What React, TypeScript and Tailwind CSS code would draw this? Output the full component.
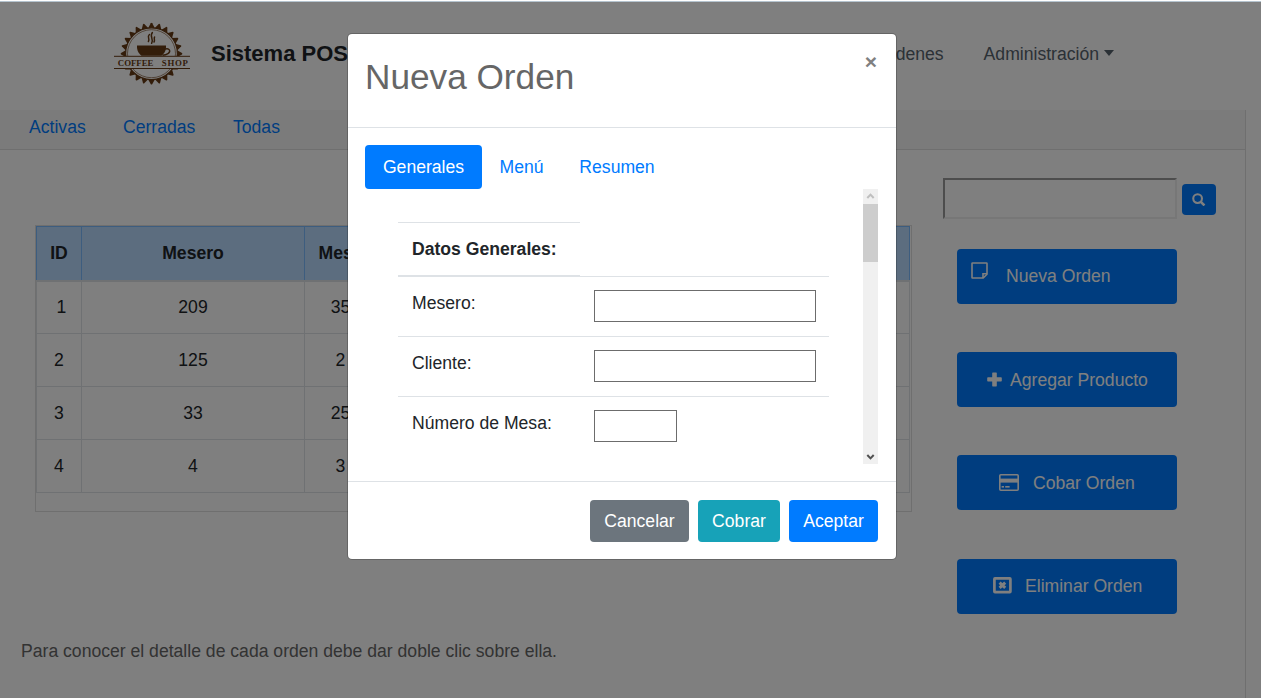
import type { ReactNode } from "react";

const TEETH = Array.from({ length: 24 }, (_, i) => i * 15);

function Logo() {
  return (
    <svg width="78" height="66" viewBox="113 21 78 66" className="shrink-0 text-[#663a14]" fill="currentColor">
      <g>
        {TEETH.map((a) => (
          <path key={a} d="M147.9 28.4 L150.8 23.2 Q151.5 22.4 152.2 23.2 L155.1 28.4 Z" transform={`rotate(${a} 151.5 53.7)`} />
        ))}
      </g>
      <circle cx="151.5" cy="53.7" r="25.9" fill="white" stroke="currentColor" strokeWidth="1.2" />
      <circle cx="151.5" cy="53.7" r="24" fill="none" stroke="currentColor" strokeWidth="0.6" />
      <rect x="113" y="56" width="78" height="12.4" fill="white" />
      <rect x="114" y="55.8" width="76" height="1" />
      <rect x="114" y="68" width="76" height="1" />
      <path d="M137 45.6 H166 C166.2 50 165 53 161.5 55.8 H141.5 C138 53 136.8 50 137 45.6 Z" />
      <path d="M164.5 49.2 C170 47.5 171 51.5 168 53.6 C166.4 54.8 164.5 55.2 162.5 55.2" fill="none" stroke="currentColor" strokeWidth="1.4" />
      <path d="M149.4 34.5 C146.5 37 150.3 38.5 148.4 41.5 M152.4 32.5 C149 36.5 154.2 38.5 151.6 43.3 M154.6 37 C153.4 38.5 155.4 39.8 154 42" fill="none" stroke="currentColor" strokeWidth="1.5" strokeLinecap="round" />
      <text x="117.8" y="65.6" textLength="35.6" lengthAdjust="spacing" fontFamily="Liberation Serif, serif" fontWeight="bold" fontSize="8.8">COFFEE</text>
      <text x="161.8" y="65.6" textLength="26" lengthAdjust="spacing" fontFamily="Liberation Serif, serif" fontWeight="bold" fontSize="8.8">SHOP</text>
    </svg>
  );
}

function SearchIcon() {
  return (
    <svg width="13.5" height="13.5" viewBox="0 0 13 13" fill="none" stroke="currentColor">
      <circle cx="5.4" cy="5.4" r="4.2" strokeWidth="2" />
      <path d="M8.5 8.5 L12 12" strokeWidth="2.4" />
    </svg>
  );
}

function NoteIcon() {
  return (
    <svg width="17" height="17" viewBox="0 0 17 17" fill="none" stroke="currentColor" strokeWidth="1.6">
      <path d="M1.6 1 H15.4 Q16 1 16 1.6 V12.2 L12.2 16 H1.6 Q1 16 1 15.4 V1.6 Q1 1 1.6 1 Z" />
      <path d="M16 11.8 H12 V16" />
    </svg>
  );
}

function PlusIcon() {
  return (
    <svg width="15" height="15" viewBox="0 0 15 15" fill="currentColor">
      <path d="M5.8 0.4 H9.2 Q9.8 0.4 9.8 1 V5.3 H14 Q14.8 5.3 14.8 6 V8.8 Q14.8 9.5 14 9.5 H9.8 V13.8 Q9.8 14.4 9.2 14.4 H5.8 Q5.2 14.4 5.2 13.8 V9.5 H1 Q0.2 9.5 0.2 8.8 V6 Q0.2 5.3 1 5.3 H5.2 V1 Q5.2 0.4 5.8 0.4 Z" />
    </svg>
  );
}

function CardIcon() {
  return (
    <svg width="20" height="17" viewBox="0 0 20 17" fill="currentColor">
      <rect x="0.8" y="0.8" width="18.4" height="15.4" rx="1" fill="none" stroke="currentColor" strokeWidth="1.6" />
      <rect x="1" y="4.6" width="18" height="4" />
      <rect x="2.6" y="12" width="2.4" height="1.6" />
      <rect x="6.2" y="12" width="4.4" height="1.6" />
    </svg>
  );
}

function DeleteIcon() {
  return (
    <svg width="19" height="17" viewBox="0 0 19 17" fill="none" stroke="currentColor">
      <rect x="1.4" y="1.4" width="16" height="13.8" rx="0.6" strokeWidth="2.7" />
      <path d="M6.6 5.7 L12.2 10.9 M12.2 5.7 L6.6 10.9" strokeWidth="3" />
    </svg>
  );
}

function ActionButton({ icon, label, className, iconClass, labelClass }: { icon: ReactNode; label: string; className: string; iconClass?: string; labelClass?: string }) {
  return (
    <button className={`flex h-[55px] w-[220px] items-center rounded-[4px] bg-[#007bff] text-white ${className}`}>
      <span className={iconClass}>{icon}</span>
      <span className={labelClass}>{label}</span>
    </button>
  );
}

const ORDERS = [
  { id: "\u00a01", waiter: "209", table: "35" },
  { id: "2", waiter: "125", table: "2" },
  { id: "3", waiter: "33", table: "25" },
  { id: "4", waiter: "4", table: "3" },
];

function OrdersTable() {
  return (
    <div className="h-[287px] w-[877px] border border-[#dfdfdf]">
      <table className="w-[874px] table-fixed border-collapse text-center">
        <colgroup>
          <col className="w-[45px]" />
          <col className="w-[223px]" />
          <col className="w-[72px]" />
          <col />
        </colgroup>
        <thead>
          <tr className="h-[54px] bg-[#b8daff]">
            {["ID", "Mesero", "Mesa", ""].map((h) => (
              <th key={h} className="border border-b-2 border-[#7abaff] border-b-[#dee2e6] p-0 font-bold">{h}</th>
            ))}
          </tr>
        </thead>
        <tbody>
          {ORDERS.map((o) => (
            <tr key={o.waiter} className="h-[53px]">
              <td className="border border-[#dee2e6] p-0">{o.id}</td>
              <td className="border border-[#dee2e6] p-0">{o.waiter}</td>
              <td className="border border-[#dee2e6] p-0">{o.table}</td>
              <td className="border border-[#dee2e6] p-0" />
            </tr>
          ))}
        </tbody>
      </table>
    </div>
  );
}

function FormRow({ label, inputClass }: { label: string; inputClass: string }) {
  return (
    <div className="flex h-[60px] border-t border-[#dee2e6]">
      <label className="w-[182px] shrink-0 pt-[13px] pl-[14px]">{label}</label>
      <input className={`mt-[13px] ml-[14px] h-[32px] border border-[#6c6c6c] bg-white ${inputClass}`} />
    </div>
  );
}

function Modal() {
  return (
    <div className="absolute top-[31px] left-[347px] flex h-[527px] w-[550px] flex-col rounded-[5px] border border-black/20 bg-white bg-clip-padding">
      <div className="flex h-[94px] shrink-0 justify-between border-b border-[#dee2e6] pr-[19px] pl-[17px]">
        <h2 className="pt-[22px] text-[35.2px] leading-[42px] text-[#666]">Nueva Orden</h2>
        <button className="h-[24px] pt-[16px] text-[21px] leading-[24px] font-bold text-[#808080]">×</button>
      </div>
      <div className="flex h-[353px] shrink-0 flex-col pt-[17px] pr-[18px] pl-[17px]">
        <div className="flex h-[44px] shrink-0 text-[#007bff]">
          <a className="flex w-[117px] items-center justify-center rounded-[4px] bg-[#007bff] text-white">Generales</a>
          <a className="flex w-[79px] items-center justify-center">Menú</a>
          <a className="flex w-[112px] items-center justify-center">Resumen</a>
        </div>
        <div className="flex h-[275px] justify-between">
          <div className="mt-[33px] ml-[33px] w-[431px]">
            <div className="flex h-[54px] w-[182px] items-center border-t border-b border-[#dee2e6] pl-[14px] font-bold">Datos Generales:</div>
            <FormRow label="Mesero:" inputClass="w-[222px]" />
            <FormRow label="Cliente:" inputClass="w-[222px]" />
            <FormRow label="Número de Mesa:" inputClass="w-[83px]" />
          </div>
          <div className="flex w-[15px] flex-col bg-[#f0f0f0]">
            <svg width="15" height="15" viewBox="0 0 15 15" fill="none" stroke="#bfbfbf" strokeWidth="2">
              <path d="M4.3 9 L7.5 5.6 L10.7 9" />
            </svg>
            <div className="h-[58px] bg-[#cdcdcd]" />
            <svg className="mt-auto" width="15" height="15" viewBox="0 0 15 15" fill="none" stroke="#505050" strokeWidth="2">
              <path d="M4.3 6 L7.5 9.4 L10.7 6" />
            </svg>
          </div>
        </div>
      </div>
      <div className="flex grow justify-end gap-[9px] border-t border-[#dee2e6] pt-[18px] pr-[18px] text-white">
        <button className="h-[42px] w-[99px] rounded-[4px] bg-[#6c757d]">Cancelar</button>
        <button className="h-[42px] w-[82px] rounded-[4px] bg-[#17a2b8]">Cobrar</button>
        <button className="h-[42px] w-[89px] rounded-[4px] bg-[#007bff]">Aceptar</button>
      </div>
    </div>
  );
}

export default function App() {
  return (
    <div className="flex h-[698px] w-[1261px] flex-col overflow-hidden bg-white font-['Liberation_Sans',Arial,sans-serif] text-[17.6px] leading-[26.4px] text-[#212529]">
      <div className="h-[2px] shrink-0 border-b border-[#b5c4cf] bg-white" />
      <div className="relative flex grow flex-col">
        <header className="flex h-[108px] shrink-0 items-start">
          <div className="mt-[19px] ml-[113px]"><Logo /></div>
          <h1 className="mt-[38px] ml-[20px] text-[22px] leading-[28px] font-bold">Sistema POS</h1>
          <nav className="mt-[39px] mr-[147px] ml-auto flex text-[#56626d]">
            <a className="mr-[40px]">Ordenes</a>
            <a className="flex">
              Administración
              <span className="mt-[9px] ml-[5px] h-0 w-0 border-x-[5.5px] border-t-[6px] border-x-transparent border-t-[#56626d]" />
            </a>
          </nav>
        </header>
        <section className="flex w-[1246px] grow flex-col border-r border-[#dfdfdf]">
          <div className="flex h-[40px] shrink-0 border-b border-[#dfdfdf] bg-[#f7f7f7] pt-[4px] pl-[29px] text-[#007bff]">
            <a className="w-[94px]">Activas</a>
            <a className="w-[110px]">Cerradas</a>
            <a>Todas</a>
          </div>
          <div className="flex h-[464px] shrink-0">
            <div className="pt-[75px] pl-[35px]"><OrdersTable /></div>
            <div className="ml-[31px] pt-[28px]">
              <div className="flex items-start gap-[5px]">
                <input className="h-[41px] w-[234px] border-2 border-t-[#9a9a9a] border-r-[#eee] border-b-[#eee] border-l-[#9a9a9a] bg-white" />
                <button className="mt-[6px] flex h-[31px] w-[34px] items-center justify-center rounded-[4px] bg-[#007bff] text-white">
                  <SearchIcon />
                </button>
              </div>
              <div className="mt-[30px] ml-[14px] flex flex-col">
                <ActionButton icon={<NoteIcon />} label="Nueva Orden" iconClass="-mt-[13px]" labelClass="-mt-[1px]" className="gap-[18px] pl-[14px]" />
                <ActionButton icon={<PlusIcon />} label="Agregar Producto" iconClass="-mt-[1px]" labelClass="mt-[1px]" className="mt-[48px] gap-[8px] pl-[30px]" />
                <ActionButton icon={<CardIcon />} label="Cobar Orden" iconClass="-mt-[1px]" labelClass="mt-[1px]" className="mt-[48px] gap-[14px] pl-[42px]" />
                <ActionButton icon={<DeleteIcon />} label="Eliminar Orden" iconClass="-mt-[2px]" labelClass="-mt-[1px]" className="mt-[49px] gap-[13px] pl-[36px]" />
              </div>
            </div>
          </div>
          <p className="mt-[24px] pl-[21px] text-[#666]">Para conocer el detalle de cada orden debe dar doble clic sobre ella.</p>
        </section>
        <div className="absolute inset-0 bg-black/50" />
        <Modal />
      </div>
    </div>
  );
}
